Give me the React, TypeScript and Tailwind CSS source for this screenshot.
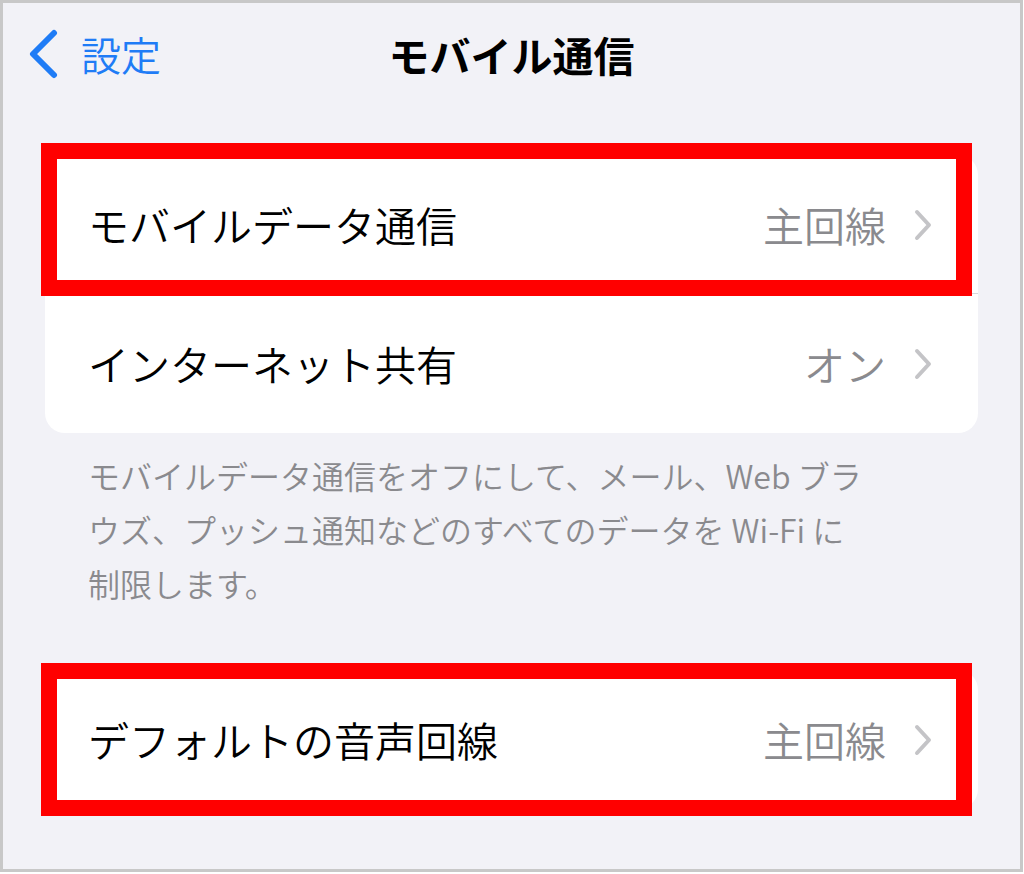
import React from "react";

// Settings > Mobile data screen, with the red annotation boxes over two rows
interface RowProps {
  label: string;
  value: string;
  divider?: boolean;
  marked?: boolean;
  markTop?: string;
}

const Chevron: React.FC = () => (
  <svg width="20" height="34" viewBox="0 0 20 34" fill="none">
    <polyline
      points="4,4 16,17 4,30"
      stroke="#c4c4c7"
      strokeWidth="4"
      strokeLinecap="round"
      strokeLinejoin="round"
    />
  </svg>
);

const Row: React.FC<RowProps> = ({ label, value, divider, marked, markTop }) => (
  <div className="relative h-[139px]">
    <div className="flex h-full items-center justify-between pl-[43px] pr-[45px]">
      <span className="text-[41px] font-[350] leading-none text-black">{label}</span>
      <span className="flex items-center gap-[27px]">
        <span className="text-[41px] font-[350] leading-none text-[#8a8a8e]">{value}</span>
        <Chevron />
      </span>
    </div>
    {divider && (
      <div className="absolute bottom-0 left-[45px] right-0 h-px bg-[#d8d8dc]" />
    )}
    {marked && (
      <div
        className={`pointer-events-none absolute left-[-4px] h-[153px] w-[931px] border-[16px] border-[#ff0000] ${markTop}`}
      />
    )}
  </div>
);

export default function App() {
  return (
    <div className="h-[874px] w-[1024px] bg-white font-['Noto_Sans_CJK_JP','Noto_Sans',sans-serif]">
      <div className="h-[872px] w-[1023px] border-[3px] border-[#c8c8c8] bg-[#f2f2f7]">
        {/* nav bar */}
        <div className="grid h-[102px] grid-cols-[1fr_auto_1fr] items-center">
          <div className="flex items-center gap-[23px] pl-[25px]">
            <svg width="30" height="50" viewBox="0 0 30 50" fill="none">
              <polyline
                points="26,4 5,25 26,46"
                stroke="#1f7cf6"
                strokeWidth="6"
                strokeLinecap="round"
                strokeLinejoin="round"
              />
            </svg>
            <span className="text-[40px] font-[350] leading-none text-[#1f7cf6]">設定</span>
          </div>
          <h1 className="text-[41px] font-bold leading-none text-black">モバイル通信</h1>
          <div />
        </div>

        {/* first group */}
        <div className="mx-[42px] mt-[50px] rounded-[20px] bg-white">
          <Row
            label="モバイルデータ通信"
            value="主回線"
            divider
            marked
            markTop="top-[-12px]"
          />
          <Row label="インターネット共有" value="オン" />
        </div>

        <p className="mt-[15px] pl-[85px] text-[32px] font-[350] leading-[54px] whitespace-nowrap text-[#8a8a8e]">
          モバイルデータ通信をオフにして、メール、Web ブラ
          <br />
          ウズ、プッシュ通知などのすべてのデータを Wi-Fi に
          <br />
          制限します。
        </p>

        {/* second group */}
        <div className="mx-[42px] mt-[60px] rounded-[20px] bg-white">
          <Row
            label="デフォルトの音声回線"
            value="主回線"
            marked
            markTop="top-[-7px]"
          />
        </div>
      </div>
    </div>
  );
}
